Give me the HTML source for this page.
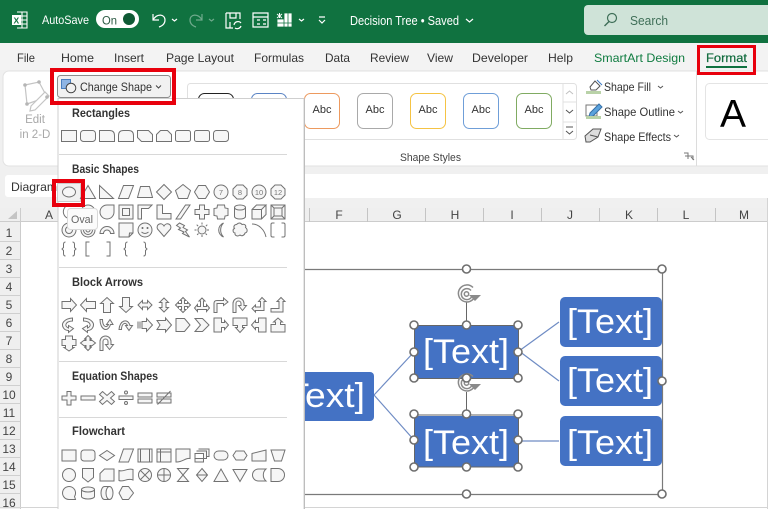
<!DOCTYPE html>
<html lang="en"><head><meta charset="utf-8"><title>Decision Tree - Excel</title>
<style>
html,body{margin:0;padding:0;width:768px;height:509px;overflow:hidden;background:#fff}
svg{display:block;font-family:"Liberation Sans",sans-serif;filter:blur(.3px)}
.t{font-size:12px;fill:#333}
.h{font-size:11.5px;font-weight:bold;fill:#333}
.w{font-size:12px;fill:#fff}
.c{font-size:12px;fill:#444;text-anchor:middle}
.b{font-size:34px;fill:#fff}
.s path,.s rect,.s circle,.s ellipse{fill:#f6f6f6;stroke:#727272;stroke-width:1}
.s .n{fill:none}
.s text{font-size:7.5px;fill:#777;text-anchor:middle;stroke:none}
.hd circle{fill:#fff;stroke:#6e6e6e;stroke-width:1.6}
.i{fill:none;stroke:#fff;stroke-width:1.2}
.r{fill:none;stroke:#e8000d}
</style></head><body>
<svg width="768" height="509" viewBox="0 0 768 509" xmlns="http://www.w3.org/2000/svg">
<!-- backgrounds -->
<rect width="768" height="509" fill="#fff"/>
<rect width="768" height="43" fill="#107240"/>
<rect y="43" width="768" height="27" fill="#f3f3f3"/>
<rect y="70" width="768" height="138" fill="#f0f0f0"/>
<rect x="3" y="71" width="770" height="95" rx="6" fill="#fff" stroke="#e2e2e2"/>
<!-- title bar -->
<g class="i">
<path d="M17 12H27V28H17M22 12V28M21 16H27M21 20H27M21 24H27" stroke-width="1.100"/>
<rect x="12" y="15" width="9" height="10" fill="#fff" stroke="none"/>
</g>
<text x="13.500" y="23.500" font-size="8.500" font-weight="bold" fill="#107240">X</text>
<text class="w" x="42" y="24" textLength="47" lengthAdjust="spacingAndGlyphs">AutoSave</text>
<rect x="96" y="10" width="43" height="18" rx="9" fill="#fff"/>
<text x="102" y="24.500" font-size="12" fill="#2c5a44" textLength="15" lengthAdjust="spacingAndGlyphs">On</text>
<circle cx="129" cy="19" r="6" fill="#0f5a35"/>
<path class="i" stroke-width="1.400" d="M153 14V20H159M153 20C157 13 165 14 165 20C165 24 162 26 159 27"/>
<path class="i" d="M172 19L174.500 21L177 19"/>
<path class="i" opacity=".4" d="M202 14V20H196M202 20C198 13 190 14 190 20C190 24 193 26 196 27"/>
<path class="i" opacity=".4" d="M209 19L211.500 21L214 19"/>
<path class="i" d="M226 13H240V19M226 13V28H233M230 13V18H236V13M230 28V22M234 25A4 4 0 0 1 241 23M241 26A4 4 0 0 1 235 28"/>
<path class="i" d="M253 13H268V27H253ZM253 17H268M257 20H260M257 24H260M263 20H266M263 24H266"/>
<path d="M284 13H292V27H277V19H284ZM277 23H292M284 19V27M288 13V27" fill="#fff" stroke="#107240" stroke-width=".8"/>
<path d="M277 14L282 18M282 14L277 18M279.500 13V18" stroke="#fff" stroke-width="1" fill="none"/>
<path class="i" d="M299 19L301.500 21L304 19"/>
<path class="i" d="M319 17H325M319 20L322 23L325 20"/>
<text x="350" y="25" font-size="12.500" fill="#fff" textLength="109" lengthAdjust="spacingAndGlyphs">Decision Tree • Saved</text>
<path class="i" stroke-width="1.500" d="M466 19L469.500 22L473 19"/>
<rect x="584" y="5" width="190" height="30" rx="4" fill="#cfe3d8"/>
<circle cx="612" cy="18" r="4.500" fill="none" stroke="#3f6f58" stroke-width="1.200"/>
<path d="M609 21.500L604.500 26" stroke="#3f6f58" stroke-width="1.400"/>
<text x="630" y="25" font-size="12.500" fill="#3f6f58" textLength="38" lengthAdjust="spacingAndGlyphs">Search</text>
<!-- tabs -->
<g class="t">
<text x="17" y="62" textLength="18" lengthAdjust="spacingAndGlyphs">File</text>
<text x="61" y="62" textLength="33" lengthAdjust="spacingAndGlyphs">Home</text>
<text x="114" y="62" textLength="30" lengthAdjust="spacingAndGlyphs">Insert</text>
<text x="166" y="62" textLength="68" lengthAdjust="spacingAndGlyphs">Page Layout</text>
<text x="254" y="62" textLength="50" lengthAdjust="spacingAndGlyphs">Formulas</text>
<text x="325" y="62" textLength="25" lengthAdjust="spacingAndGlyphs">Data</text>
<text x="370" y="62" textLength="39" lengthAdjust="spacingAndGlyphs">Review</text>
<text x="427" y="62" textLength="26" lengthAdjust="spacingAndGlyphs">View</text>
<text x="472" y="62" textLength="56" lengthAdjust="spacingAndGlyphs">Developer</text>
<text x="548" y="62" textLength="25" lengthAdjust="spacingAndGlyphs">Help</text>
</g>
<text x="594" y="62" font-size="12" fill="#107c41" textLength="91" lengthAdjust="spacingAndGlyphs">SmartArt Design</text>
<text x="706" y="62" font-size="12" fill="#0f6a3c" stroke="#0f6a3c" stroke-width=".2" textLength="41" lengthAdjust="spacingAndGlyphs">Format</text>
<rect x="706" y="66" width="41" height="2" fill="#107240"/>
<!-- edit in 2-D -->
<path d="M25 85L39 82L47 97L27 104Z" fill="none" stroke="#c4c4c4" stroke-width="1.200"/>
<path d="M31 106L45 92L49 96L35 110L30 111Z" fill="#fff" stroke="#c4c4c4" stroke-width="1.200"/>
<g fill="#b5b5b5"><circle cx="25" cy="85" r="1.800"/><circle cx="39" cy="82" r="1.800"/><circle cx="47" cy="97" r="1.800"/><circle cx="27" cy="104" r="1.800"/></g>
<text x="35" y="123" font-size="11.500" fill="#a8a8a8" text-anchor="middle">Edit</text>
<text x="35" y="138" font-size="11.500" fill="#a8a8a8" text-anchor="middle">in 2-D</text>
<!-- gallery -->
<rect x="187.500" y="83.500" width="389" height="56" rx="3" fill="#fff" stroke="#e0e0e0"/>
<path d="M563 84V140M563 102H576M563 122H576" stroke="#e0e0e0" fill="none"/>
<path d="M566 94L569.500 91L573 94" fill="none" stroke="#c0c0c0"/>
<path d="M566 110L569.500 113L573 110" fill="none" stroke="#555"/>
<path d="M566 127H573M566 131L569.500 134L573 131" fill="none" stroke="#555"/>
<rect x="198.500" y="93.500" width="35" height="35" rx="6" fill="#fff" stroke="#222"/>
<rect x="251.500" y="93.500" width="35" height="35" rx="6" fill="#fff" stroke="#5b84c4"/>
<g font-size="11" fill="#333" text-anchor="middle">
<rect x="304.500" y="93.500" width="35" height="35" rx="6" fill="#fff" stroke="#ed9a5f"/><text x="322" y="113">Abc</text>
<rect x="357.500" y="93.500" width="35" height="35" rx="6" fill="#fff" stroke="#a9a9a9"/><text x="375" y="113">Abc</text>
<rect x="410.500" y="93.500" width="35" height="35" rx="6" fill="#fff" stroke="#f5c344"/><text x="428" y="113">Abc</text>
<rect x="463.500" y="93.500" width="35" height="35" rx="6" fill="#fff" stroke="#6f9ed8"/><text x="481" y="113">Abc</text>
<rect x="516.500" y="93.500" width="35" height="35" rx="6" fill="#fff" stroke="#80ab62"/><text x="534" y="113">Abc</text>
</g>
<text x="400" y="161" font-size="11" fill="#444" textLength="61" lengthAdjust="spacingAndGlyphs">Shape Styles</text>
<!-- shape commands -->
<path d="M590 87L595 81L600 86L596 90H591Z" fill="#fff" stroke="#555"/>
<path d="M597 80L602 85" stroke="#3a78c2" fill="none"/>
<rect x="586" y="91" width="15" height="3" fill="#b9d2a8"/>
<text class="t" x="604" y="91" textLength="47" lengthAdjust="spacingAndGlyphs">Shape Fill</text>
<path d="M658 86L660.500 88L663 86" fill="none" stroke="#555"/>
<path d="M586 105H597V116H586Z" fill="none" stroke="#777"/>
<path d="M590 113L599 104L602 107L593 116L589 117Z" fill="#5ba2dc" stroke="#3570a8"/>
<rect x="586" y="116" width="15" height="3" fill="#b9d2a8"/>
<text class="t" x="604" y="116" textLength="71" lengthAdjust="spacingAndGlyphs">Shape Outline</text>
<path d="M678 111L680.500 113L683 111" fill="none" stroke="#555"/>
<path d="M585 136L593 129H601L598 137L590 142H586Z" fill="#ddd" stroke="#555"/>
<path d="M590 135L598 137" stroke="#555" fill="none"/>
<text class="t" x="604" y="141" textLength="67" lengthAdjust="spacingAndGlyphs">Shape Effects</text>
<path d="M674 135L676.500 137L679 135" fill="none" stroke="#555"/>
<path d="M689 160V154H685M689 154L685 154M686 157H694V161" fill="none" stroke="#777" transform="translate(-1 -1)"/>
<path d="M691 157L694 160" stroke="#777"/>
<path d="M696.500 71V166" stroke="#dcdcdc"/>
<rect x="705.500" y="83.500" width="70" height="56" rx="4" fill="#fff" stroke="#e4e4e4"/>
<text x="733" y="127" font-size="39" fill="#000" text-anchor="middle">A</text>
<!-- formula bar area -->
<rect x="5" y="175" width="60" height="22" rx="3" fill="#fff"/>
<rect x="304" y="174" width="464" height="24" fill="#fff"/>
<text x="11" y="191" font-size="12" fill="#333" textLength="46" lengthAdjust="spacingAndGlyphs">Diagram</text>
<!-- sheet headers -->
<rect y="208" width="768" height="14" fill="#efefef"/>
<rect y="208" width="20" height="301" fill="#efefef"/>
<path d="M20.500 208V509M0 221.500H768" stroke="#cccccc"/>
<path d="M17 211V219H8Z" fill="#c4c4c4"/>
<g stroke="#c4c4c4"><path d="M367.500 208V222M425.500 208V222M483.500 208V222M541.500 208V222M599.500 208V222M657.500 208V222M715.500 208V222M309.500 208V222"/></g>
<g class="c">
<text x="49" y="219">A</text><text x="339" y="219">F</text><text x="397" y="219">G</text><text x="455" y="219">H</text><text x="512" y="219">I</text><text x="570" y="219">J</text><text x="629" y="219">K</text><text x="686" y="219">L</text><text x="744" y="219">M</text>
<text x="9" y="237">1</text><text x="9" y="255">2</text><text x="9" y="273">3</text><text x="9" y="291">4</text><text x="9" y="309">5</text><text x="9" y="327">6</text><text x="9" y="345">7</text><text x="9" y="363">8</text><text x="9" y="381">9</text><text x="9" y="399">10</text><text x="9" y="417">11</text><text x="9" y="435">12</text><text x="9" y="453">13</text><text x="9" y="471">14</text><text x="9" y="489">15</text><text x="9" y="507">16</text>
</g>
<g stroke="#cfcfcf"><path d="M0 241.500H20M0 259.500H20M0 277.500H20M0 295.500H20M0 313.500H20M0 331.500H20M0 349.500H20M0 367.500H20M0 385.500H20M0 403.500H20M0 421.500H20M0 439.500H20M0 457.500H20M0 475.500H20M0 493.500H20"/></g>
<path d="M0 507.500H768M767.500 198V509" stroke="#d4d4d4"/>
<!-- SmartArt -->
<path d="M300 269.500H662.500V494.500H300" fill="none" stroke="#7a7a7a" stroke-width="1.200"/>
<path d="M374 395L414 352M374 395L414 440M519 351L559 322M519 351L559 381M519 441H559" stroke="#6f8cc4" stroke-width="1.200" fill="none"/>
<path d="M466.500 302V325M466.500 392V415" stroke="#666" stroke-width="1"/>
<g fill="#4472c4">
<rect x="290" y="372" width="84" height="49" rx="4"/>
<rect x="415" y="326" width="103" height="52"/>
<rect x="415" y="416" width="103" height="51"/>
<rect x="560" y="297" width="102" height="50" rx="5"/>
<rect x="560" y="356" width="102" height="50" rx="5"/>
<rect x="560" y="416" width="102" height="50" rx="5"/>
</g>
<path d="M414.500 325.500H518.500V378.500H414.500ZM414.500 415H518.500V467H414.500Z" fill="none" stroke="#666" stroke-width="1"/>
<g class="b">
<text x="279" y="407">[T<tspan x="305" textLength="60" lengthAdjust="spacingAndGlyphs">ext]</tspan></text>
<text x="423" y="363" textLength="86" lengthAdjust="spacingAndGlyphs">[Text]</text>
<text x="423" y="454" textLength="86" lengthAdjust="spacingAndGlyphs">[Text]</text>
<text x="567" y="333" textLength="86" lengthAdjust="spacingAndGlyphs">[Text]</text>
<text x="567" y="392" textLength="86" lengthAdjust="spacingAndGlyphs">[Text]</text>
<text x="567" y="454" textLength="86" lengthAdjust="spacingAndGlyphs">[Text]</text>
</g>
<g fill="none" stroke="#8a8a8a" stroke-width="1.500">
<path d="M473 287.500A8.500 8.500 0 1 0 475 296"/><path d="M471 290.500A5.500 5.500 0 1 0 472 296"/><circle cx="466.500" cy="294" r="2.200"/>
<path d="M469 295H481L475 301Z" fill="#8a8a8a" stroke="none"/>
<path d="M473 376.500A8.500 8.500 0 1 0 475 385"/><path d="M471 379.500A5.500 5.500 0 1 0 472 385"/><circle cx="466.500" cy="383" r="2.200"/>
<path d="M469 384H481L475 390Z" fill="#8a8a8a" stroke="none"/>
</g>
<g class="hd">
<circle cx="466.500" cy="269" r="4"/><circle cx="662" cy="269" r="4"/><circle cx="662" cy="381" r="4"/><circle cx="466.500" cy="494" r="4"/><circle cx="662" cy="494" r="4"/>
<circle cx="414" cy="325" r="4"/><circle cx="466.500" cy="325" r="4"/><circle cx="518" cy="325" r="4"/><circle cx="414" cy="352" r="4"/><circle cx="518" cy="352" r="4"/><circle cx="414" cy="378" r="4"/><circle cx="466.500" cy="378" r="4"/><circle cx="518" cy="378" r="4"/>
<circle cx="414" cy="414" r="4"/><circle cx="466.500" cy="414" r="4"/><circle cx="518" cy="414" r="4"/><circle cx="414" cy="440" r="4"/><circle cx="518" cy="440" r="4"/><circle cx="414" cy="467" r="4"/><circle cx="466.500" cy="467" r="4"/><circle cx="518" cy="467" r="4"/>
</g>
<!-- change shape button -->
<rect x="57.500" y="75.500" width="113" height="22" rx="3" fill="#f1f1f1" stroke="#8c8c8c"/>
<rect x="61.500" y="79.500" width="9" height="9" fill="#8fb5e4" stroke="#4a7fc0"/>
<circle cx="71" cy="88" r="4.800" fill="#f1f1f1" stroke="#444"/>
<text class="t" x="80" y="91" textLength="72" lengthAdjust="spacingAndGlyphs">Change Shape</text>
<path d="M156 85.500L158.500 88L161 85.500" fill="none" stroke="#444"/>
<!-- menu -->
<rect x="58" y="98.500" width="246" height="420" fill="#fff" stroke="#cfcfcf"/>
<path d="M304.500 99V509" stroke="#bdbdbd"/>
<text class="h" x="72" y="117" textLength="58" lengthAdjust="spacingAndGlyphs">Rectangles</text>
<text class="h" x="72" y="173" textLength="67" lengthAdjust="spacingAndGlyphs">Basic Shapes</text>
<text class="h" x="72" y="286" textLength="71" lengthAdjust="spacingAndGlyphs">Block Arrows</text>
<text class="h" x="72" y="380" textLength="86" lengthAdjust="spacingAndGlyphs">Equation Shapes</text>
<text class="h" x="72" y="435" textLength="53" lengthAdjust="spacingAndGlyphs">Flowchart</text>
<path d="M59 154.500H287M59 267.500H287M59 361.500H287M59 417.500H287" stroke="#d8d8d8"/>
<g class="s">
<!-- rectangles -->
<g transform="translate(61.500 130.500)">
<path d="M0 0H15V11H0Z"/><rect x="19" width="15" height="11" rx="3"/>
<path transform="translate(38)" d="M0 0H10Q15 0 15 5V11H0Z"/>
<path transform="translate(57)" d="M0 11V5Q0 0 5 0H10Q15 0 15 5V11Z"/>
<path transform="translate(76)" d="M0 0H11L15 4V11H4L0 7Z"/>
<path transform="translate(95)" d="M4 0H11L15 4V11H0V4Z"/>
<rect x="114" width="15" height="11" rx="2"/><rect x="133" width="15" height="11" rx="2"/><rect x="152" width="15" height="11" rx="3"/>
</g>
<!-- basic row1 -->
<g transform="translate(61.500 184.500)">
<rect x="-4" y="-1" width="23" height="18" style="fill:#f1f1f1;stroke:#ccc"/>
<ellipse cx="7.500" cy="7.500" rx="6.500" ry="5"/>
<path transform="translate(19)" d="M7.500 1L15 14H0Z"/>
<path transform="translate(38)" d="M0 1L14 14H0Z"/>
<path transform="translate(57)" d="M0 14L5 1H15L10 14Z"/>
<path transform="translate(76)" d="M3 2H12L15 13H0Z"/>
<path transform="translate(95)" d="M7.500 0L15 7.500L7.500 15L0 7.500Z"/>
<path transform="translate(114)" d="M7.500 0L15 6L12 14H3L0 6Z"/>
<path transform="translate(133)" d="M4 1H11L15 7.500L11 14H4L0 7.500Z"/>
<g transform="translate(152)"><circle cx="7.500" cy="7.500" r="7"/><text x="7.500" y="10.500">7</text></g>
<g transform="translate(171)"><path d="M4.500 0.500H10.500L14.500 4.500V10.500L10.500 14.500H4.500L0.500 10.500V4.500Z"/><text x="7.500" y="10.500">8</text></g>
<g transform="translate(190)"><circle cx="7.500" cy="7.500" r="7"/><text x="7.500" y="10.500">10</text></g>
<g transform="translate(209)"><path d="M4.500 0.500H10.500L14.500 4.500V10.500L10.500 14.500H4.500L0.500 10.500V4.500Z"/><text x="7.500" y="10.500">12</text></g>
</g>
<!-- basic row2 -->
<g transform="translate(61.500 204.500)">
<path class="n" d="M7 14A7 7 0 1 1 12 1"/>
<circle cx="26.500" cy="7.500" r="7"/>
<path transform="translate(38)" d="M7.500 0.500H14.500V7.500A7 7 0 1 1 7.500 0.500Z"/>
<path transform="translate(57)" d="M0.500 0.500H14.500V14.500H0.500ZM4 4H11V11H4Z"/>
<path transform="translate(76)" d="M0.500 0.500H14.500L11 4H4V14.500H0.500Z"/>
<path transform="translate(95)" d="M0.500 0.500H6V9H14.500V14.500H0.500Z"/>
<path transform="translate(114)" d="M0.500 14.500L10 0.500H14.500L5 14.500Z"/>
<path transform="translate(133)" d="M5 0.500H10V5H14.500V10H10V14.500H5V10H0.500V5H5Z"/>
<path transform="translate(152)" d="M4 0.500H11L11.500 3.500L14.500 4V11L11.500 11.500L11 14.500H4L3.500 11.500L0.500 11V4L3.500 3.500Z"/>
<path transform="translate(171)" d="M2 3V12A5.500 2.500 0 0 0 13 12V3A5.500 2.500 0 0 0 2 3A5.500 2.500 0 0 0 13 3"/>
<path transform="translate(190)" d="M0.500 5H10V14.500H0.500ZM0.500 5L5 0.500H14.500L10 5M14.500 0.500V10L10 14.500"/>
<path transform="translate(209)" d="M0.500 0.500H14.500V14.500H0.500ZM3.500 3.500H11.500V11.500H3.500ZM0.500 0.500L3.500 3.500M14.500 0.500L11.500 3.500M0.500 14.500L3.500 11.500M14.500 14.500L11.500 11.500"/>
</g>
<!-- basic row3 -->
<g transform="translate(61.500 222.500)">
<circle cx="7.500" cy="7.500" r="7"/><circle cx="7.500" cy="7.500" r="3.500"/>
<circle cx="26.500" cy="7.500" r="7"/><circle cx="26.500" cy="7.500" r="4.500"/><circle cx="26.500" cy="7.500" r="2"/>
<path transform="translate(38)" d="M0.500 11A7 7 0 0 1 14.500 11H11A3.500 3.500 0 0 0 4 11Z"/>
<path transform="translate(57)" d="M0.500 0.500H14.500V10.500L10.500 14.500H0.500ZM10.500 14.500L11 10.500H14.500"/>
<g transform="translate(76)"><circle cx="7.500" cy="7.500" r="7"/><circle cx="5" cy="5.500" r="1" style="fill:#666;stroke:none"/><circle cx="10" cy="5.500" r="1" style="fill:#666;stroke:none"/><path class="n" d="M4 9.500Q7.500 12.500 11 9.500"/></g>
<path transform="translate(95)" d="M7.500 14L1 6.500C-1 2 5 -1 7.500 3.500C10 -1 16 2 14 6.500Z"/>
<path transform="translate(114)" d="M4 0.500L9 3L7.500 5L12 7.500L10 9L14 14.500L7 11L8.500 9.500L3 7L5 5.500L1 3Z"/>
<g transform="translate(133)"><circle cx="7.500" cy="7.500" r="4"/><path class="n" stroke-dasharray="2 2" d="M7.500 0V2.500M7.500 12.500V15M0 7.500H2.500M12.500 7.500H15M2.200 2.200L4 4M11 11L12.800 12.800M12.800 2.200L11 4M4 11L2.200 12.800"/></g>
<path transform="translate(152)" d="M10 0.500A7.500 7.500 0 0 0 10 14.500A10 10 0 0 1 10 0.500Z"/>
<path transform="translate(171)" d="M4 2C6 0 8 0 9.500 2C12 1 14 3 13 5C15.500 7 15 10 12.500 10.500C12 13 9 14 7.500 12.500C5 14.500 2 13 2.500 10.500C0 10 0 6.500 2 6C0.500 4 2 2 4 2Z"/>
<path class="n" transform="translate(190)" d="M0.500 1.500C7 1.500 13 7 14.500 14.500"/>
<path class="n" transform="translate(209)" d="M4 0.500H2Q0.500 0.500 0.500 2V13Q0.500 14.500 2 14.500H4M11 0.500H13Q14.500 0.500 14.500 2V13Q14.500 14.500 13 14.500H11"/>
</g>
<!-- basic row4 -->
<g transform="translate(61.500 241.500)">
<path class="n" d="M4 0.500Q2 0.500 2 3V6L0.500 7.500L2 9V12Q2 14.500 4 14.500M11 0.500Q13 0.500 13 3V6L14.500 7.500L13 9V12Q13 14.500 11 14.500"/>
<path class="n" d="M28 0.500H24.500V14.500H28M45 0.500H48.500V14.500H45"/>
<path class="n" d="M66 0.500Q64 0.500 64 3V6L62.500 7.500L64 9V12Q64 14.500 66 14.500M82 0.500Q84 0.500 84 3V6L85.500 7.500L84 9V12Q84 14.500 82 14.500"/>
</g>
<!-- arrows row1 -->
<g transform="translate(61.500 297.500)">
<path d="M0.500 4H9V1L15 7.500L9 14V11H0.500Z"/>
<path transform="translate(19)" d="M15 4H6V1L0 7.500L6 14V11H15Z"/>
<path transform="translate(38)" d="M4 15V6H1L7.500 0L14 6H11V15Z"/>
<path transform="translate(57)" d="M4 0V9H1L7.500 15L14 9H11V0Z"/>
<path transform="translate(76)" d="M0.500 7.500L5 3V5.500H10V3L14.500 7.500L10 12V9.500H5V12Z"/>
<path transform="translate(95)" d="M7.500 0.500L12 5H9.500V10H12L7.500 14.500L3 10H5.500V5H3Z"/>
<path transform="translate(114)" d="M7.500 0L10.500 3H9V6H12V4.500L15 7.500L12 10.500V9H9V12H10.500L7.500 15L4.500 12H6V9H3V10.500L0 7.500L3 4.500V6H6V3H4.500Z"/>
<path transform="translate(133)" d="M7.500 0.500L10.500 3.500H9V9H12V7L15 10.500L12 14V12H3V14L0 10.500L3 7V9H6V3.500H4.500Z"/>
<path transform="translate(152)" d="M0.500 15V6Q0.500 3 3.500 3H10V0.500L14.500 4.500L10 8V6H3.500V15Z"/>
<path transform="translate(171)" d="M0.500 15V6A5.500 5.500 0 0 1 11.500 6V8H14L10 13L6 8H8.500V6A2.500 2.500 0 0 0 3.500 6V15Z"/>
<path transform="translate(190)" d="M0.500 11L4 7.500V9.500H9V4H7L10.500 0L14.500 4H12.500V13H4V14.500Z"/>
<path transform="translate(209)" d="M0.500 11H8.500V4H6.500L10.500 0L14.500 4H12.500V14.500H0.500Z"/>
</g>
<!-- arrows row2 -->
<g transform="translate(61.500 317.500)">
<path d="M11 0.500C3 1 -1 6 2 10.500C3 12 5 13 7 13V15L12 11L7 8V10.500C3 9 3 4 11 3.500Z"/>
<path transform="translate(19)" d="M3 0.500C11 1 15 6 12 10.500C11 12 9 13 7 13V15L2 11L7 8V10.500C11 9 11 4 3 3.500Z"/>
<path transform="translate(38)" d="M0.500 2C0.500 12 8 16 11 7H13.500L10.500 2L7 7H9C7 11 3 9 3 2Z"/>
<path transform="translate(57)" d="M0.500 12C1 3 9 0 11.500 8H14L10.500 13L7 8H9C7 4 3 6 3 12Z"/>
<path transform="translate(76)" d="M0.500 4V11M2.500 4V11M4.500 4H9V1L15 7.500L9 14V11H4.500Z"/>
<path transform="translate(95)" d="M0.500 3H9V0.500L15 7.500L9 14.500V12H0.500L3.500 7.500Z"/>
<path transform="translate(114)" d="M0.500 1H9L14.500 7.500L9 14H0.500Z"/>
<path transform="translate(133)" d="M0.500 1H8L14.500 7.500L8 14H0.500L6 7.500Z"/>
<path transform="translate(152)" d="M0.500 0.500H8V5H11V3L15 7.500L11 12V10H8V14.500H0.500Z"/>
<path transform="translate(171)" d="M0.500 0.500H14.500V8H10V10H12L7.500 15L3 10H5V8H0.500Z"/>
<path transform="translate(190)" d="M14.500 0.500H7V5H4V3L0 7.500L4 12V10H7V14.500H14.500Z"/>
<path transform="translate(209)" d="M0.500 14.500H14.500V7H10V4.500H12L7.500 0.500L3 4.500H5V7H0.500Z"/>
</g>
<!-- arrows row3 -->
<g transform="translate(61.500 335.500)">
<path d="M4 0.500H11V4H14.500V10H11V12H12.500L7.500 15.500L2.500 12H4V10H0.500V4H4Z"/>
<path transform="translate(19)" d="M7.500 0L10.500 3H9.500V5H10.500V4L15 7.500L10.500 11V10H9.500V12H10.500L7.500 15L4.500 12H5.500V10H4.500V11L0 7.500L4.500 4V5H5.500V3H4.500Z"/>
<path transform="translate(38)" d="M0.500 15V6A5.500 5.500 0 0 1 11.500 6V9H14L10 14L6 9H8.500V6A2.500 2.500 0 0 0 3.500 6V15Z"/>
</g>
<!-- equation -->
<g transform="translate(61.500 390.500)">
<path d="M5.500 1H9.500V5.500H14.500V9.500H9.500V14.500H5.500V9.500H0.500V5.500H5.500Z"/>
<rect x="19.500" y="5.500" width="14" height="4"/>
<path transform="translate(38)" d="M3 1L7.500 5L12 1L15 4L11 7.500L15 11L12 14L7.500 10L3 14L0 11L4 7.500L0 4Z"/>
<g transform="translate(57)"><rect x="0.500" y="5.500" width="14" height="3.500"/><circle cx="7.500" cy="2" r="1.500"/><circle cx="7.500" cy="12.500" r="1.500"/></g>
<g transform="translate(76)"><rect x="0.500" y="2.500" width="14" height="4"/><rect x="0.500" y="8.500" width="14" height="4"/></g>
<g transform="translate(95)"><rect x="0.500" y="2.500" width="14" height="4"/><rect x="0.500" y="8.500" width="14" height="4"/><path class="n" d="M1 14L14 0.500"/></g>
</g>
<!-- flowchart row1 -->
<g transform="translate(61.500 447.500)">
<rect x="0.500" y="2.500" width="14" height="11"/>
<rect x="19.500" y="2.500" width="14" height="11" rx="3"/>
<path transform="translate(38)" d="M7.500 3L15 8L7.500 13L0 8Z"/>
<path transform="translate(57)" d="M0.500 14.500L5 1.500H15L10 14.500Z"/>
<path transform="translate(76)" d="M0.500 1.500H14.500V14.500H0.500ZM3 1.500V14.500M12 1.500V14.500"/>
<path transform="translate(95)" d="M0.500 1.500H14.500V14.500H0.500ZM0.500 4.500H14.500M4 1.500V14.500"/>
<path transform="translate(114)" d="M0.500 1.500H14.500V11C10 10 7 15 0.500 14.500Z"/>
<path transform="translate(133)" d="M4 1.500H14.500V9H12V3.500H2M2 3.500H12V11H0.500V14.500H9V6H0.500V14"/>
<rect x="152.500" y="3.500" width="14" height="9" rx="4.500"/>
<path transform="translate(171)" d="M3.500 3.500H11.500L14.500 8L11.500 12.500H3.500L0.500 8Z"/>
<path transform="translate(190)" d="M0.500 6L14.500 2.500V13.500H0.500Z"/>
<path transform="translate(209)" d="M0.500 2.500H14.500L11 13.500H4Z"/>
</g>
<!-- flowchart row2 -->
<g transform="translate(61.500 467.500)">
<circle cx="7.500" cy="7.500" r="6.500"/>
<path transform="translate(19)" d="M2 1H13V10L7.500 14.500L2 10Z"/>
<path transform="translate(38)" d="M5 1.500H14.500V13.500H0.500V6Z"/>
<path transform="translate(57)" d="M0.500 3V13C5 15 9 10 14.500 12.500V2C9 0 5 5 0.500 3Z"/>
<g transform="translate(76)"><circle cx="7.500" cy="7.500" r="6.500"/><path class="n" d="M3 3L12 12M12 3L3 12"/></g>
<g transform="translate(95)"><circle cx="7.500" cy="7.500" r="6.500"/><path class="n" d="M7.500 1V14M1 7.500H14"/></g>
<path transform="translate(114)" d="M2 1H13L2 14H13Z"/>
<path transform="translate(133)" d="M7.500 1L13 7.500L7.500 14L2 7.500ZM2 7.500H13"/>
<path transform="translate(152)" d="M7.500 1.500L14.500 14H0.500Z"/>
<path transform="translate(171)" d="M0.500 2H14.500L7.500 14Z"/>
<path transform="translate(190)" d="M14.500 1.500H7A6 6 0 0 0 7 13.500H14.500A8 8 0 0 1 14.500 1.500Z"/>
<path transform="translate(209)" d="M0.500 1H7.500A6.500 6.500 0 0 1 7.500 14H0.500Z"/>
</g>
<!-- flowchart row3 -->
<g transform="translate(61.500 485.500)">
<path d="M14 14H7.500A6.500 6.500 0 1 1 13 11L14 14Z"/>
<path transform="translate(19)" d="M1 4V11A6.500 2.500 0 0 0 14 11V4A6.500 2.500 0 0 0 1 4A6.500 2.500 0 0 0 14 4"/>
<path transform="translate(38)" d="M5 1H10A3.500 6.500 0 0 1 10 14H5A3.500 6.500 0 0 1 5 1ZM10 1A3.500 6.500 0 0 0 10 14"/>
<path transform="translate(57)" d="M4 1H10L15 7.500L10 14H4L0.500 7.500Z"/>
</g>
</g>
<!-- tooltip -->
<rect x="67.500" y="208.500" width="30" height="21" rx="3" fill="#fbfbfb" stroke="#d8d8d8"/>
<text x="71" y="223" font-size="11" fill="#666" textLength="22" lengthAdjust="spacingAndGlyphs">Oval</text>
<!-- red annotation boxes -->
<rect class="r" x="52" y="70" width="122" height="33" stroke-width="4"/>
<rect class="r" x="698.500" y="46.500" width="56" height="27" stroke-width="3"/>
<rect class="r" x="54" y="181" width="29" height="24" stroke-width="4"/>
</svg>
</body></html>
